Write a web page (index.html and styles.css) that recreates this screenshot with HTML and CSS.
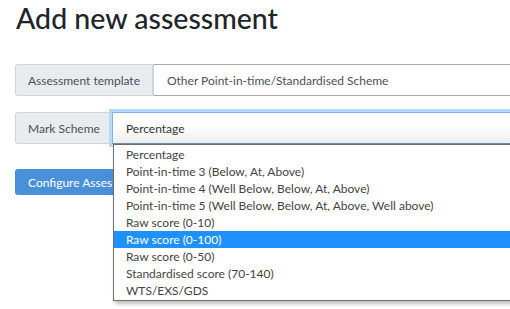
FILE: index.html
```html
<!DOCTYPE html>
<html>
  <head>
    <meta charset="utf-8" />
    <title>Add new assessment</title>
    <link rel="stylesheet" href="styles.css">
  </head>

  <body>
    <div class="page">
      <h2 class="title">Add new assessment</h2>

      <div class="input-group">
        <span class="addon">Assessment template</span>
        <div class="field">Other Point-in-time/Standardised Scheme</div>
      </div>

      <div class="input-group">
        <span class="addon">Mark Scheme</span>
        <div class="field select-open">
          Percentage
          <ul class="options">
            <li>Percentage</li>
            <li>Point-in-time 3 (Below, At, Above)</li>
            <li>Point-in-time 4 (Well Below, Below, At, Above)</li>
            <li>Point-in-time 5 (Well Below, Below, At, Above, Well above)</li>
            <li>Raw score (0-10)</li>
            <li class="selected">Raw score (0-100)</li>
            <li>Raw score (0-50)</li>
            <li>Standardised score (70-140)</li>
            <li>WTS/EXS/GDS</li>
          </ul>
        </div>
      </div>

      <button class="btn-configure">Configure Assessment</button>
    </div>
  </body>
</html>
```

FILE: styles.css
```css
body {
  margin: 0;
}

.page {
  width: 495px;
  height: 309px;
  overflow: hidden;
  padding: 0 0 0 15px;
  font-family: Lato, sans-serif;
  color: #212529;
}

.title {
  margin: 0 0 28px 1px;
  font-size: 28.5px;
  font-weight: 500;
  line-height: 36px;
}

.input-group {
  display: flex;
  width: 600px;
  height: 32px;
  margin-bottom: 16px;
  font-size: 12px;
  color: #495057;
}

.input-group .addon {
  display: flex;
  align-items: center;
  padding: 0 12px;
  background-color: #e9ecef;
  border: 1px solid #ced4da;
  border-radius: 3px 0 0 3px;
  box-sizing: border-box;
}

.input-group .field {
  flex: 1;
  display: flex;
  align-items: center;
  padding: 0 13px;
  border: 1px solid #a9a9a9;
  border-left: 1px solid #ced4da;
  box-sizing: border-box;
}

.input-group .select-open {
  position: relative;
  margin-left: -1px;
  border: 1px solid #7fb3e6;
  border-bottom-color: #6f8eab;
  box-shadow: 0 0 0 3px #b8daf8;
  background: linear-gradient(#ffffff 40%, #eeeeee);
  color: #333333;
}

.options {
  position: absolute;
  top: 31px;
  left: 0;
  right: 0;
  margin: 0;
  padding: 1px 0;
  list-style: none;
  background-color: #ffffff;
  border: 1px solid #6e6e6e;
  box-shadow: 2px 3px 4px rgba(0, 0, 0, 0.25);
  z-index: 2;
}

.options li {
  height: 17px;
  line-height: 17px;
  padding-left: 12px;
  font-size: 12px;
  color: #444444;
  white-space: nowrap;
}

.options li.selected {
  background-color: #1e90ff;
  color: #ffffff;
}

.btn-configure {
  display: block;
  margin-top: 25px;
  height: 26px;
  padding: 0 13px;
  background-color: #4a90d9;
  border: 0;
  border-radius: 3px;
  font-family: Lato, sans-serif;
  font-size: 12px;
  color: #ffffff;
}
```
